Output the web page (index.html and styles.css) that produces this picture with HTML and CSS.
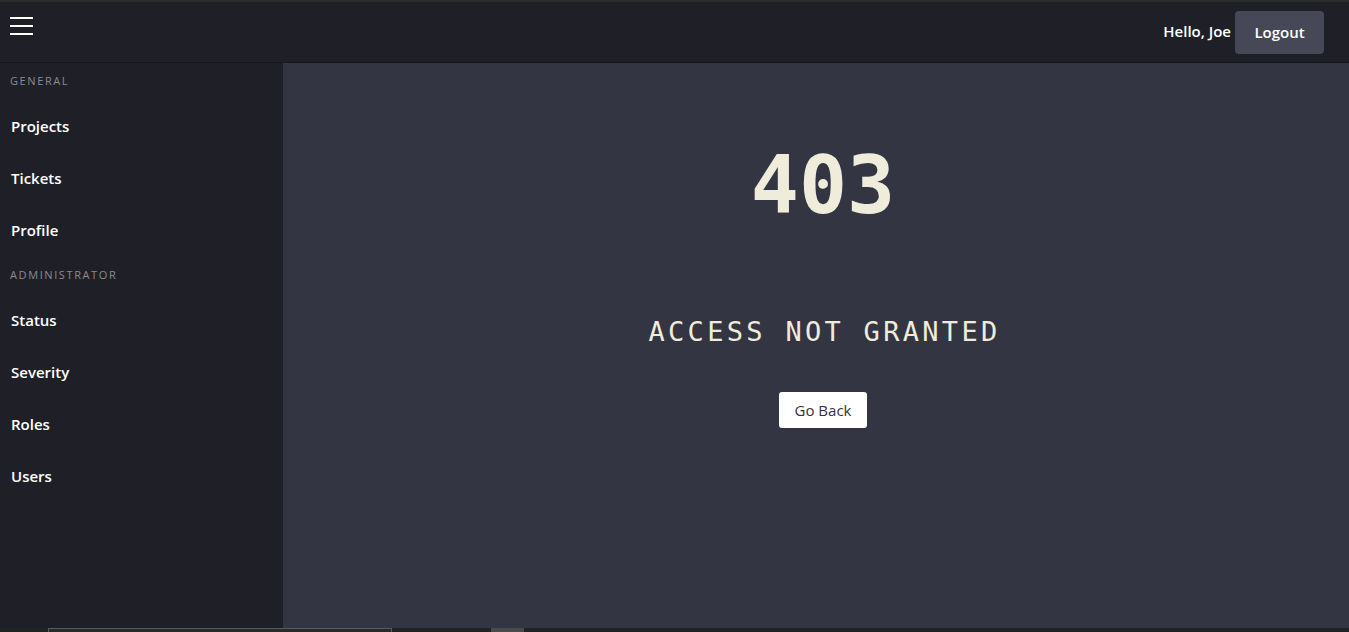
FILE: index.html
```html
<!DOCTYPE html>
<html lang="en">
<head>
<meta charset="utf-8">
<title>403</title>
<link rel="stylesheet" href="styles.css">
</head>
<body>
<div class="topstrip"></div>
<header class="navbar">
  <button class="burger" aria-label="menu">
    <svg width="24" height="20" viewBox="0 0 24 20"><rect x="0" y="1" width="23" height="2" fill="#fff"/><rect x="0" y="9" width="23" height="2" fill="#fff"/><rect x="0" y="17" width="23" height="2" fill="#fff"/></svg>
  </button>
  <div class="user">
    <span class="hello">Hello, Joe</span>
    <button class="logout">Logout</button>
  </div>
</header>
<div class="layout">
  <nav class="sidebar">
    <div class="section">GENERAL</div>
    <a class="item">Projects</a>
    <a class="item">Tickets</a>
    <a class="item">Profile</a>
    <div class="section">ADMINISTRATOR</div>
    <a class="item">Status</a>
    <a class="item">Severity</a>
    <a class="item">Roles</a>
    <a class="item">Users</a>
  </nav>
  <main class="main">
    <h1 class="code">403</h1>
    <h2 class="msg">ACCESS NOT GRANTED</h2>
    <button class="back">Go Back</button>
  </main>
</div>
<div class="bottomstrip">
  <div class="seg seg1"></div>
  <div class="seg seg2"></div>
  <div class="seg seg3"></div>
</div>
</body>
</html>
```
FILE: styles.css
```css
* { box-sizing: border-box; }
html, body { margin: 0; padding: 0; }
body {
  width: 1349px;
  height: 632px;
  overflow: hidden;
  background: #1e1e27;
  font-family: "Open Sans", "Noto Sans", sans-serif;
  color: #fff;
  display: flex;
  flex-direction: column;
}
.topstrip { height: 2px; background: #2c2c2c; flex: none; }
.navbar {
  height: 61px;
  flex: none;
  background: #1f1f28;
  border-bottom: 1px solid #17171d;
  display: flex;
  align-items: center;
  justify-content: space-between;
  padding: 0 25px 0 10px;
}
.burger {
  background: none;
  border: 0;
  padding: 0;
  margin-top: -13px;
  display: flex;
  cursor: pointer;
}
.user { display: flex; align-items: center; gap: 4px; }
.hello { font-size: 15px; font-weight: 600; margin-top: -2px; }
.logout {
  font-family: inherit;
  font-size: 15px;
  font-weight: 600;
  color: #fff;
  background: #464857;
  border: 0;
  border-radius: 4px;
  width: 89px;
  height: 43px;
}
.layout { flex: 1; display: flex; min-height: 0; }
.sidebar {
  width: 283px;
  flex: none;
  background: #1f1f28;
  display: flex;
  flex-direction: column;
  padding-top: 10px;
}
.section {
  font-size: 11px;
  letter-spacing: 1.6px;
  color: #8b8b90;
  padding-left: 10px;
  height: 15px;
  line-height: 15px;
}
.item {
  font-size: 15px;
  font-weight: 600;
  color: #fff;
  padding-left: 11px;
  height: 52px;
  line-height: 22px;
  display: flex;
  align-items: center;
}
.section + .item { margin-top: 12px; }
.item + .section { margin-top: 11px; }
.main {
  flex: 1;
  background: #343542;
  display: flex;
  flex-direction: column;
  align-items: center;
  padding-left: 14px;
  padding-top: 78px;
}
.code {
  margin: 0;
  font-family: "DejaVu Sans Mono", "Liberation Mono", monospace;
  font-weight: bold;
  font-size: 80px;
  line-height: 90px;
  color: #f0ecdc;
}
.msg {
  margin: 86px 0 0 0;
  font-family: "DejaVu Sans Mono", "Liberation Mono", monospace;
  font-weight: normal;
  font-size: 27px;
  letter-spacing: 3.3px;
  line-height: 30px;
  color: #f0ecdc;
  padding-left: 3px;
}
.back {
  margin-top: 45px;
  font-family: inherit;
  font-size: 15px;
  color: #333;
  background: #fff;
  border: 0;
  border-radius: 3px;
  width: 88px;
  height: 36px;
}
.bottomstrip {
  height: 4px;
  flex: none;
  background: #232323;
  display: flex;
}
.seg { height: 4px; }
.seg1 { margin-left: 48px; width: 344px; background: #2a2a2a; border: 1px solid #5a5a5a; border-bottom: 0; }
.seg2 { margin-left: 99px; width: 33px; background: #4a4a4a; }
.seg3 { margin-left: 2px; flex: 1; background: #202428; }
```
